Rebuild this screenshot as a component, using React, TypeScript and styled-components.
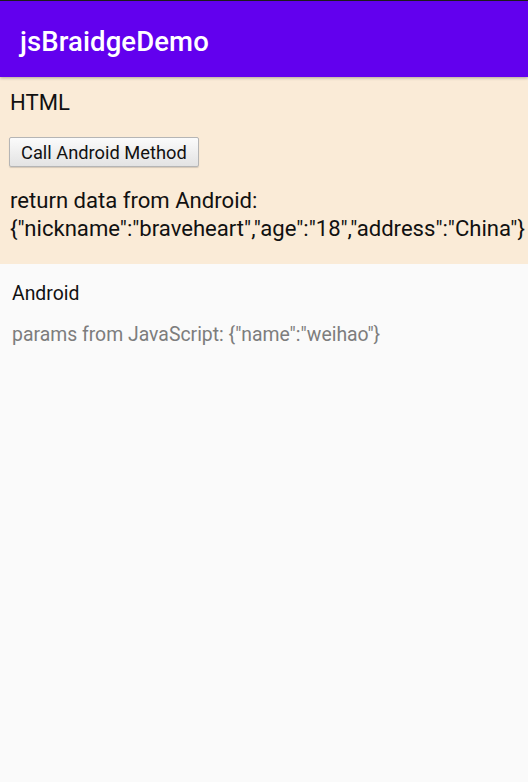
import styled, { createGlobalStyle } from "styled-components";

const GlobalStyle = createGlobalStyle`
  html, body {
    margin: 0;
    padding: 0;
    background: #fafafa;
  }
  body {
    font-family: Roboto, "Liberation Sans", sans-serif;
  }
`;

const Screen = styled.div`
  width: 528px;
  height: 782px;
  display: flex;
  flex-direction: column;
  background: #fafafa;
  overflow: hidden;
`;

const AppBar = styled.header`
  height: 77px;
  flex-shrink: 0;
  box-sizing: border-box;
  display: flex;
  align-items: center;
  padding: 4px 20px 0;
  border-top: 1px solid #1c1c1c;
  background: #6200ee;
  box-shadow: 0 1px 3px rgba(0, 0, 0, 0.3);
  position: relative;
  z-index: 1;
`;

const AppTitle = styled.h1`
  margin: 0;
  color: #ffffff;
  font-size: 27.5px;
  font-weight: 500;
  letter-spacing: 0.1px;
`;

const WebPanel = styled.section`
  height: 187px;
  flex-shrink: 0;
  box-sizing: border-box;
  padding: 13px 10px 0;
  background: #faebd7;
  color: #111;
  font-size: 22.1px;
`;

const Heading = styled.div`
  line-height: 24px;
`;

const CallButton = styled.button`
  margin: 23px 0 0 -1px;
  height: 30px;
  padding: 0 11px;
  font-family: Roboto, "Liberation Sans", sans-serif;
  font-size: 18.3px;
  color: #111;
  border: 1px solid #b5b5b5;
  border-radius: 2px;
  background: linear-gradient(#fbfbfb, #e3e3e3);
  box-shadow: 0 1px 1px rgba(0, 0, 0, 0.15);
`;

const Result = styled.p`
  margin: 19px 0 0;
  line-height: 28px;
  white-space: nowrap;
`;

const NativePanel = styled.section`
  padding: 19px 12px;
  display: flex;
  flex-direction: column;
  gap: 19px;
`;

const NativeLabel = styled.div<{ $muted?: boolean }>`
  font-size: 19.4px;
  line-height: 22px;
  color: ${({ $muted }) => ($muted ? "#7d7d7d" : "#111")};
`;

export default function App() {
  return (
    <Screen>
      <GlobalStyle />
      <AppBar>
        <AppTitle>jsBraidgeDemo</AppTitle>
      </AppBar>
      <WebPanel>
        <Heading>HTML</Heading>
        <CallButton type="button">Call Android Method</CallButton>
        <Result>
          return data from Android:
          <br />
          {'{"nickname":"braveheart","age":"18","address":"China"}'}
        </Result>
      </WebPanel>
      <NativePanel>
        <NativeLabel>Android</NativeLabel>
        <NativeLabel $muted>params from JavaScript: {'{"name":"weihao"}'}</NativeLabel>
      </NativePanel>
    </Screen>
  );
}
